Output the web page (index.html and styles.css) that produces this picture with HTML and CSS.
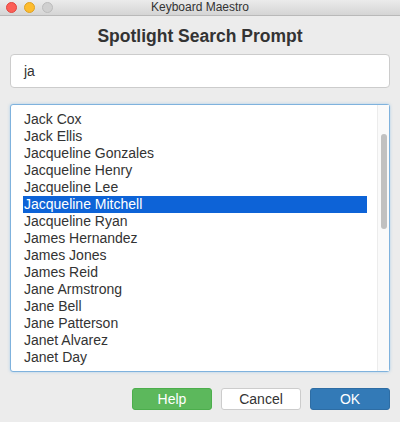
FILE: index.html
```html
<!DOCTYPE html>
<html>
<head>
<meta charset="utf-8">
<link rel="stylesheet" href="styles.css">
</head>
<body>
<div class="window">
  <div class="titlebar">
    <div class="lights">
      <span class="light red"></span>
      <span class="light yellow"></span>
      <span class="light gray"></span>
    </div>
    <div class="title">Keyboard Maestro</div>
  </div>
  <div class="content">
    <h1 class="heading">Spotlight Search Prompt</h1>
    <div class="search">ja</div>
    <div class="list">
      <ul class="items">
        <li>Jack Cox</li>
        <li>Jack Ellis</li>
        <li>Jacqueline Gonzales</li>
        <li>Jacqueline Henry</li>
        <li>Jacqueline Lee</li>
        <li class="selected">Jacqueline Mitchell</li>
        <li>Jacqueline Ryan</li>
        <li>James Hernandez</li>
        <li>James Jones</li>
        <li>James Reid</li>
        <li>Jane Armstrong</li>
        <li>Jane Bell</li>
        <li>Jane Patterson</li>
        <li>Janet Alvarez</li>
        <li>Janet Day</li>
      </ul>
      <div class="scrollbar"><div class="thumb"></div></div>
    </div>
    <div class="buttons">
      <button class="btn help">Help</button>
      <button class="btn cancel">Cancel</button>
      <button class="btn ok">OK</button>
    </div>
  </div>
</div>
</body>
</html>
```
FILE: styles.css
```css
* { box-sizing: border-box; }
html, body { margin: 0; padding: 0; }
body {
  width: 400px;
  height: 422px;
  background: #ececec;
  font-family: "Liberation Sans", Arial, sans-serif;
  color: #333;
  overflow: hidden;
}
.window { width: 400px; height: 422px; display: flex; flex-direction: column; }
.titlebar {
  height: 16px;
  background: linear-gradient(#ebebeb, #d5d5d5);
  border-bottom: 1px solid #b9b9b9;
  position: relative;
  display: flex;
  align-items: center;
  justify-content: center;
}
.lights {
  position: absolute;
  left: 6px;
  top: 2px;
  display: flex;
  gap: 7px;
}
.light { width: 11px; height: 11px; border-radius: 50%; display: block; }
.red { background: #fc5f57; border: 1px solid #e1463f; }
.yellow { background: #fdbc2e; border: 1px solid #dea123; }
.gray { background: #d0d0d0; border: 1px solid #bcbcbc; }
.title { font-size: 12px; color: #333; line-height: 15px; }
.content { padding: 0 10px 0 10px; display: flex; flex-direction: column; }
.heading {
  margin: 9px 0 0 0;
  font-size: 17.5px;
  font-weight: bold;
  text-align: center;
  line-height: 22px;
  color: #333;
}
.search {
  margin-top: 7px;
  height: 34px;
  width: 380px;
  background: #fff;
  border: 1px solid #ccc;
  border-radius: 4px;
  padding: 0 13px;
  font-size: 14px;
  line-height: 32px;
  color: #333;
}
.list {
  margin-top: 16px;
  height: 268px;
  width: 380px;
  background: #fff;
  border: 1px solid #7fb2dd;
  border-radius: 3px;
  box-shadow: 0 0 3px rgba(102,175,233,0.5);
  display: flex;
  position: relative;
}
.items {
  list-style: none;
  margin: 0;
  padding: 6px 0 0 12px;
  flex: 1;
  font-size: 14px;
  line-height: 17px;
}
.items li { padding-left: 1px; height: 17px; color: #333; width: 344px; white-space: nowrap; }
.items li.selected { background: #0d63d7; color: #fff; }
.scrollbar {
  width: 12px;
  border-left: 1px solid #ececec;
  background: #fafafa;
  padding-top: 29px;
  display: flex;
  justify-content: center;
}
.thumb { width: 6px; height: 95px; background: #c1c1c1; border-radius: 3px; }
.buttons {
  margin-top: 16px;
  display: flex;
  justify-content: flex-end;
  gap: 9px;
}
.btn {
  width: 80px;
  height: 22px;
  border-radius: 3px;
  font-family: "Liberation Sans", Arial, sans-serif;
  font-size: 14px;
  padding: 0;
  line-height: 20px;
}
.help { background: #5cb85c; border: 1px solid #4cae4c; color: #fff; }
.cancel { background: #fff; border: 1px solid #ccc; color: #333; }
.ok { background: #337ab7; border: 1px solid #2e6da4; color: #fff; }
```
